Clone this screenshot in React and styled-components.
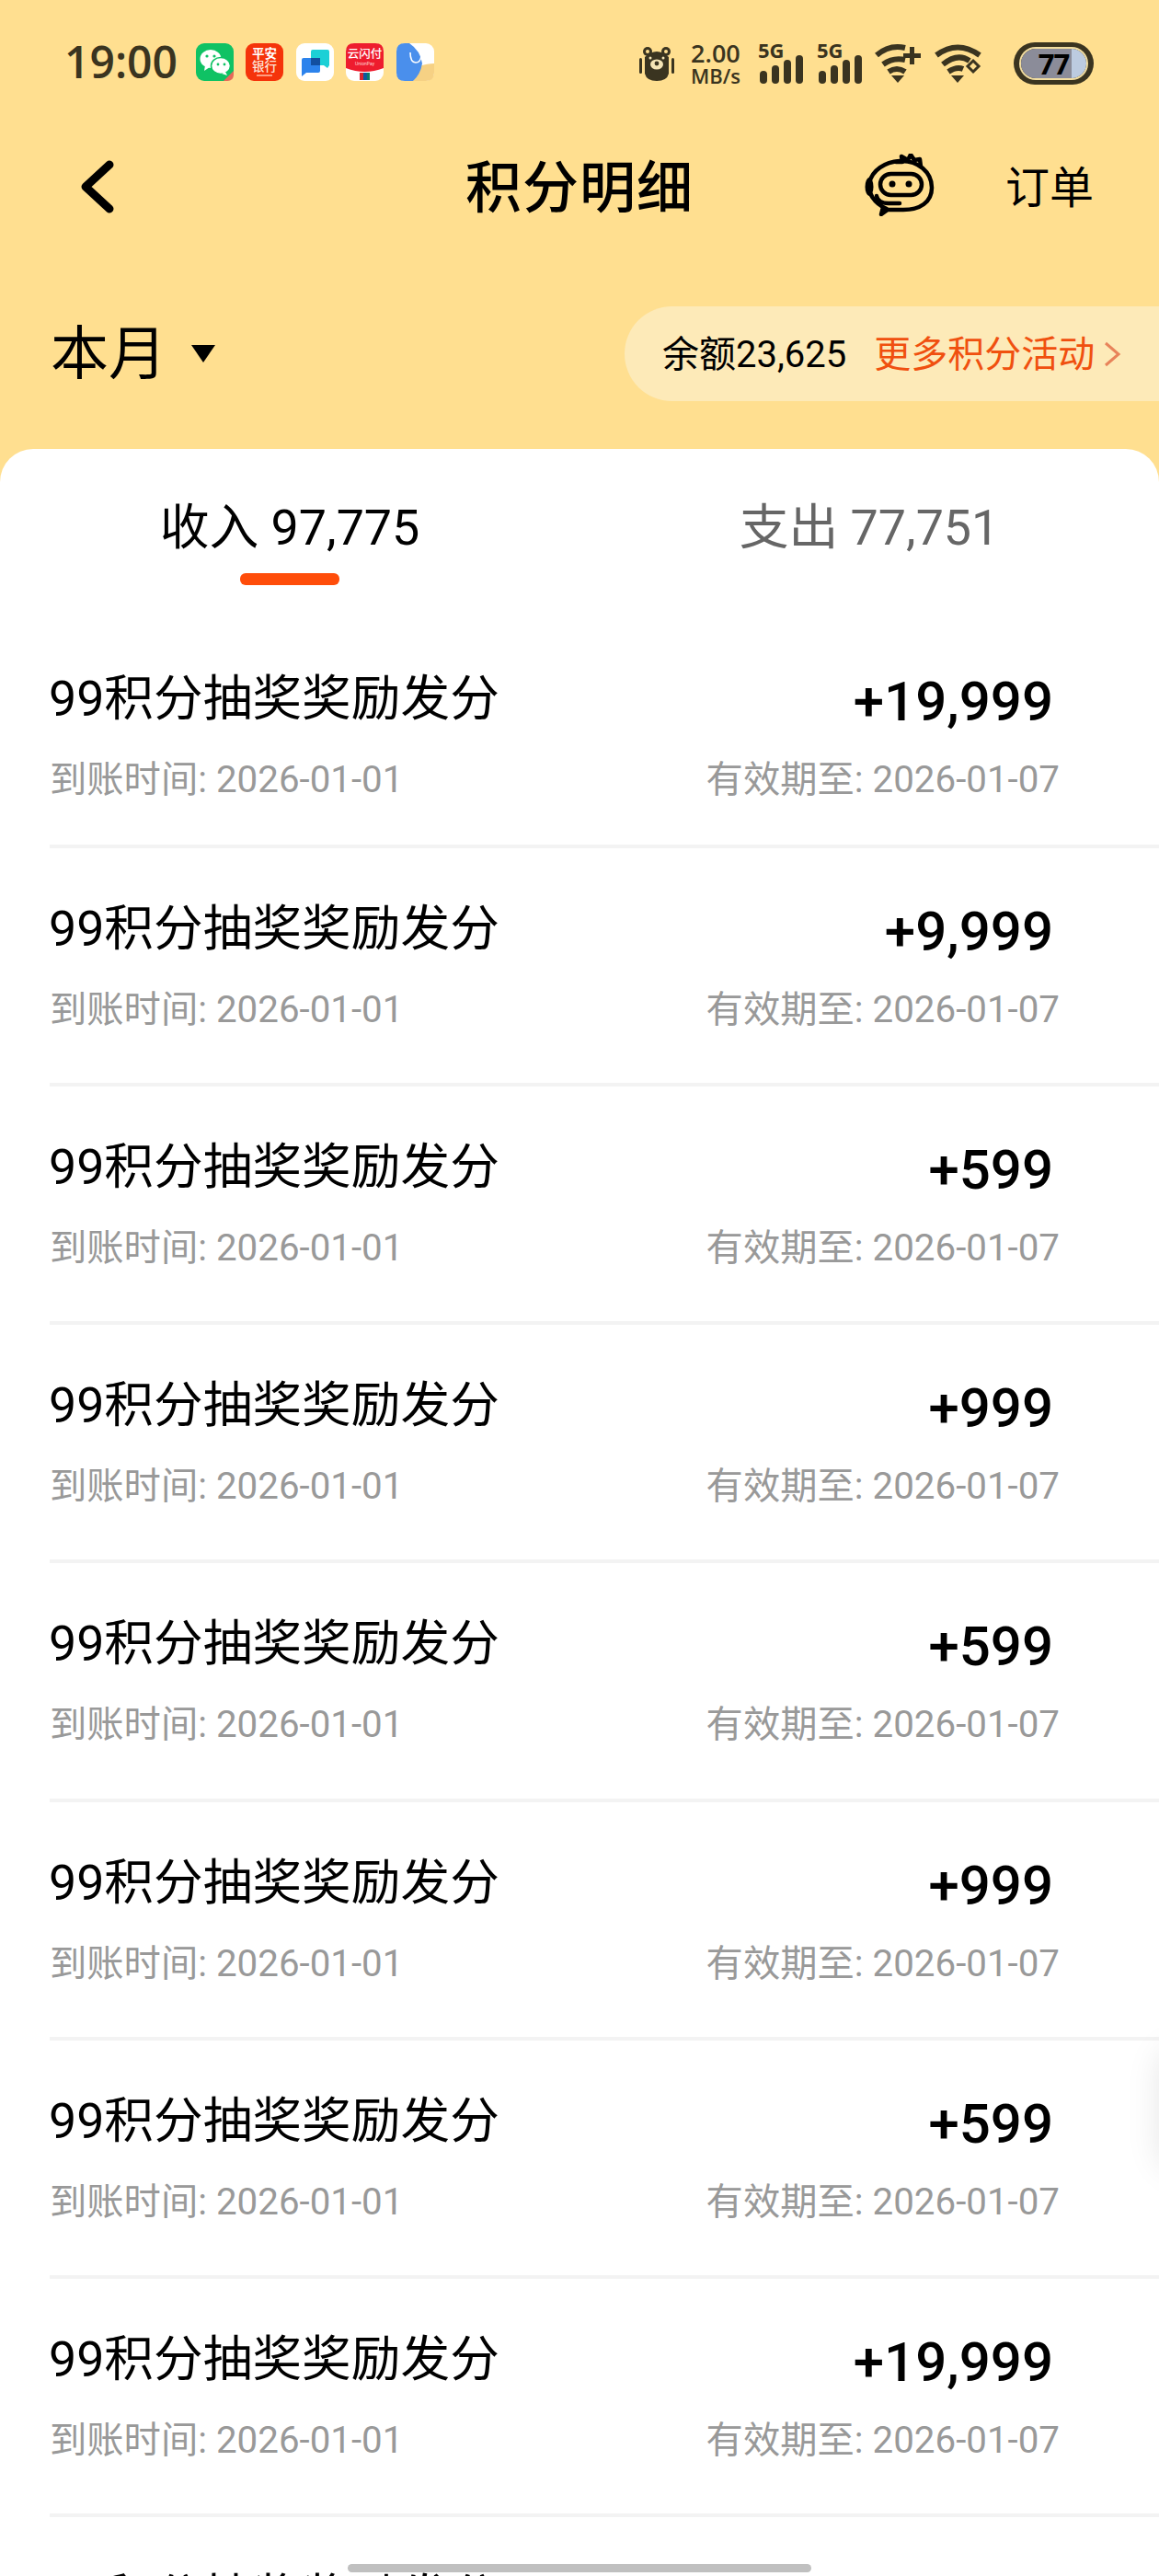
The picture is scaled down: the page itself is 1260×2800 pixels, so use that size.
import React from 'react'
import styled, { createGlobalStyle } from 'styled-components'

const sans = `Roboto, 'Noto Sans CJK SC', sans-serif`
const ink = '#3a3420'

const GlobalStyle = createGlobalStyle`
  html, body { margin: 0; padding: 0; background: #fff; }
  body { font-family: ${sans}; color: #000; }
`

const Page = styled.div`
  position: relative;
  width: 1260px;
  height: 2800px;
  overflow: hidden;
  background: #ffdf90;
`

const StatusBar = styled.div`
  height: 134px;
  box-sizing: border-box;
  padding: 0 71px 0 70px;
  display: flex;
  align-items: center;
  justify-content: space-between;
  color: ${ink};
`

const StatusLeft = styled.div`
  display: flex;
  align-items: center;
`

const Clock = styled.span`
  font-family: 'Open Sans', sans-serif;
  font-size: 48px;
  font-weight: 600;
  line-height: 48px;
  margin-right: 20px;
`

const AppIcons = styled.div`
  display: flex;
  gap: 13.5px;
`

const AppSvg = styled.svg`
  display: block;
  width: 41px;
  height: 41px;
`

const StatusRight = styled.div`
  display: flex;
  align-items: center;
  gap: 14px;
  margin-top: 3px;
`

const Bear = styled.svg`
  display: block;
  width: 38px;
  height: 38px;
  margin-right: 4px;
`

const Speed = styled.div`
  display: flex;
  flex-direction: column;
  align-items: center;
  font-family: 'Open Sans', sans-serif;
  font-weight: 600;
  margin-right: 4px;
`

const SpeedValue = styled.span`
  font-size: 27px;
  line-height: 26px;
`

const SpeedUnit = styled.span`
  font-size: 22px;
  line-height: 22px;
`

const Signal = styled.svg`
  display: block;
  width: 50px;
  height: 44px;
  overflow: visible;
`

const Wifi = styled.svg`
  display: block;
  width: 51px;
  height: 43px;
`

const Battery = styled.div`
  box-sizing: border-box;
  width: 87px;
  height: 46px;
  margin-left: 21px;
  border-radius: 23px;
  background: ${ink};
  padding: 7px 8px;
  display: flex;
`

const BatteryCell = styled.div`
  flex: 1;
  border-radius: 16px;
  box-shadow: 0 0 0 2px #f1dc9f;
  background: linear-gradient(90deg, #8b8c99 0 78%, #bccbe0 78% 100%);
  color: #000;
  font-family: 'Open Sans', sans-serif;
  font-size: 31px;
  font-weight: 700;
  line-height: 32px;
  text-align: center;
  letter-spacing: -1px;
`

const Nav = styled.div`
  height: 142px;
  display: grid;
  grid-template-columns: 1fr auto 1fr;
  align-items: center;
`

const BackIcon = styled.svg`
  display: block;
  width: 40px;
  height: 60px;
  margin: -4px 0 0 86px;
`

const Title = styled.h1`
  margin: 0;
  font-size: 61px;
  font-weight: 500;
  line-height: 70px;
  letter-spacing: 1px;
`

const NavRight = styled.div`
  display: flex;
  justify-content: flex-end;
  align-items: center;
  gap: 77px;
  padding-right: 71px;
`

const RobotIcon = styled.svg`
  display: block;
  width: 76px;
  height: 68px;
  margin-top: -8px;
`

const OrdersLink = styled.span`
  font-size: 48px;
  line-height: 56px;
`

const FilterRow = styled.div`
  margin-top: 57px;
  height: 103px;
  display: flex;
  align-items: center;
  justify-content: space-between;
  padding-left: 55px;
`

const MonthPicker = styled.div`
  display: flex;
  align-items: center;
  gap: 27px;
  font-size: 63px;
  line-height: 70px;
`

const Caret = styled.span`
  width: 0;
  height: 0;
  border-left: 13px solid transparent;
  border-right: 13px solid transparent;
  border-top: 19px solid #000;
`

const BalancePill = styled.div`
  box-sizing: border-box;
  width: 581px;
  height: 103px;
  padding: 0 0 5px 41px;
  display: flex;
  align-items: center;
  background: #fdeab8;
  border-radius: 52px 0 0 52px;
  font-size: 40px;
`

const MoreLink = styled.span`
  margin-left: 30px;
  color: #f0500f;
`

const PillArrow = styled.svg`
  display: block;
  width: 20px;
  height: 30px;
  margin: 5px 0 0 9px;
`

const Card = styled.div`
  margin-top: 52px;
  background: #fff;
  border-radius: 36px 36px 0 0;
`

const Tabs = styled.div`
  display: grid;
  grid-template-columns: 1fr 1fr;
  padding-top: 56px;
`

const Tab = styled.div`
  display: flex;
  flex-direction: column;
  align-items: center;
  gap: 19px;
  font-size: 53.8px;
  line-height: 60px;
  color: ${p => (p.$active ? '#000' : '#666')};
  &::after {
    content: '';
    width: 108px;
    height: 13px;
    border-radius: 6px;
    background: ${p => (p.$active ? '#ff4d0a' : 'transparent')};
  }
`

const List = styled.div`
  padding-top: 36px;
`

const Row = styled.div`
  box-sizing: border-box;
  height: 259.14px;
  margin-left: 54px;
  padding: 58px 108px 0 0;
  border-bottom: 4px solid #f3f3f3;
  &:first-child {
    height: 250px;
  }
`

const RowLine = styled.div`
  display: flex;
  justify-content: space-between;
  align-items: flex-start;
`

const RowTitle = styled.span`
  margin-left: -1px;
  font-size: 53.7px;
  line-height: 60px;
`

const Amount = styled.span`
  display: block;
  height: 60px;
  font-size: 60px;
  font-weight: 500;
  line-height: 65px;
  padding-right: 7px;
`

const RowMeta = styled(RowLine)`
  margin-top: 33px;
  font-size: 40.3px;
  line-height: 50px;
  color: #999;
`

const EdgeShadow = styled.div`
  position: absolute;
  top: 2225px;
  right: -50px;
  width: 50px;
  height: 135px;
  border-radius: 30px;
  box-shadow: 0 0 36px rgba(0, 0, 0, 0.1);
`

const HomeBar = styled.div`
  position: absolute;
  left: 378px;
  bottom: 4px;
  width: 504px;
  height: 9px;
  border-radius: 5px;
  background: #c0c0c0;
`

const amounts = ['+19,999', '+9,999', '+599', '+999', '+599', '+999', '+599', '+19,999']

const cjk = "'Noto Sans CJK SC', sans-serif"

const WeChatIcon = () => (
  <AppSvg viewBox="0 0 41 41">
    <rect width="41" height="41" rx="9" fill="#0fc264" />
    <path d="M30 41 L41 30 L41 34 Q41 41 34 41 Z" fill="#e8685a" />
    <ellipse cx="16" cy="17" rx="11.5" ry="10" fill="#fff" />
    <path d="M10 24 L9 30 L15 26 Z" fill="#fff" />
    <ellipse cx="27" cy="24.5" rx="10.5" ry="9" fill="#fff" stroke="#0fc264" strokeWidth="1.5" />
    <path d="M32 31 L34 35 L28 33 Z" fill="#fff" />
    <circle cx="12" cy="14" r="1.6" fill="#0fc264" />
    <circle cx="20" cy="14" r="1.6" fill="#0fc264" />
    <circle cx="24" cy="23" r="1.4" fill="#0fc264" />
    <circle cx="31" cy="23" r="1.4" fill="#0fc264" />
  </AppSvg>
)

const PingAnIcon = () => (
  <AppSvg viewBox="0 0 41 41">
    <rect width="41" height="41" rx="9" fill="#f5330a" />
    <text x="20.5" y="16" textAnchor="middle" fontSize="13.5" fontWeight="700" fontFamily={cjk} fill="#fff">平安</text>
    <text x="20.5" y="30" textAnchor="middle" fontSize="13.5" fontWeight="500" fontFamily={cjk} fill="#fde5da">银行</text>
    <rect x="12" y="34" width="17" height="2" fill="#ff9d80" />
  </AppSvg>
)

const ChatIcon = () => (
  <AppSvg viewBox="0 0 41 41">
    <rect width="41" height="41" rx="9" fill="#fff" />
    <path d="M16 9 Q16 7 18 7 L34 7 Q36 7 36 9 L36 24 L34 27 L30 24 L16 24 Z" fill="#1cd0d6" />
    <path d="M6 18 Q6 16 8 16 L24 16 Q26 16 26 18 L26 30 Q26 32 24 32 L11 32 L6 36 Z" fill="#2c83ec" />
    <rect x="16" y="16" width="10" height="8" fill="#124f9f" />
  </AppSvg>
)

const UnionPayIcon = () => (
  <AppSvg viewBox="0 0 41 41">
    <rect width="41" height="41" rx="9" fill="#fff" />
    <path d="M0 9 Q0 0 9 0 L32 0 Q41 0 41 9 L41 27 Q20.5 35 0 27 Z" fill="#ee1c2e" />
    <text x="20.5" y="16" textAnchor="middle" fontSize="12.5" fontWeight="500" fontFamily={cjk} fill="#fff">云闪付</text>
    <text x="20.5" y="24" textAnchor="middle" fontSize="5" fontFamily="Roboto, sans-serif" fill="#ffd6d6">UnionPay</text>
    <rect x="15" y="32" width="4" height="8" fill="#d9232e" />
    <rect x="19" y="32" width="4" height="8" fill="#0b5a9e" />
    <rect x="23" y="32" width="3" height="8" fill="#0a7a6a" />
  </AppSvg>
)

const LeafIcon = () => (
  <AppSvg viewBox="0 0 41 41">
    <rect width="41" height="41" rx="9" fill="#fff" />
    <path d="M41 22 L41 32 Q41 41 32 41 L18 41 L24 25 Q34 22 41 22 Z" fill="#f6d184" />
    <path d="M0 9 Q0 0 9 0 L14 0 Q26 8 28 22 Q26 34 18 41 L9 41 Q0 41 0 32 Z" fill="#4a8fec" />
    <path d="M15 10 Q15 21 21 21 Q26 21 27 14" fill="none" stroke="#fff" strokeWidth="1.6" />
  </AppSvg>
)

const BearIcon = () => (
  <Bear viewBox="0 0 38 38">
    <circle cx="9" cy="6" r="5" fill={ink} />
    <circle cx="29" cy="6" r="5" fill={ink} />
    <circle cx="9" cy="6" r="2" fill="#ffdf90" />
    <circle cx="29" cy="6" r="2" fill="#ffdf90" />
    <rect x="0" y="13" width="3" height="17" rx="1.5" fill={ink} />
    <rect x="35" y="13" width="3" height="17" rx="1.5" fill={ink} />
    <path d="M6 12 Q19 0 32 12 L32 30 Q30 38 19 38 Q8 38 6 30 Z" fill={ink} />
    <ellipse cx="19" cy="20" rx="7" ry="5.5" fill="#f4e4b5" />
    <circle cx="19" cy="19" r="2.4" fill={ink} />
    <circle cx="12" cy="13" r="1.5" fill="#f4e4b5" />
    <circle cx="26" cy="13" r="1.5" fill="#f4e4b5" />
  </Bear>
)

const SignalIcon = () => (
  <Signal viewBox="0 0 50 44">
    <text x="1" y="16" fontSize="22" fontWeight="700" fontFamily="'Open Sans', sans-serif" fill={ink}>5G</text>
    <rect x="3" y="30" width="8" height="14" rx="4" fill={ink} />
    <rect x="16" y="24" width="8" height="20" rx="4" fill={ink} />
    <rect x="29" y="18" width="8" height="26" rx="4" fill={ink} />
    <rect x="42" y="13" width="8" height="31" rx="4" fill={ink} />
  </Signal>
)

const WifiPlusIcon = () => (
  <Wifi viewBox="0 0 51 43">
    <g fill="none" stroke={ink} strokeWidth="6">
      <path d="M2 13 Q16 1 33 5" />
      <path d="M9 23 Q20 15 33 18" />
      <path d="M15 31 Q24 25 33 31" />
    </g>
    <path d="M18 35 L32 35 L25 43 Z" fill={ink} />
    <rect x="38" y="4" width="5" height="19" fill={ink} />
    <rect x="31" y="11" width="19" height="5" fill={ink} />
  </Wifi>
)

const WifiDiamondIcon = () => (
  <Wifi viewBox="0 0 51 43">
    <g fill="none" stroke={ink} strokeWidth="6">
      <path d="M2 13 Q25 -4 49 13" />
      <path d="M9 23 Q25 10 38 19" />
      <path d="M15 31 Q24 25 31 28" />
    </g>
    <path d="M18 35 L32 35 L25 43 Z" fill={ink} />
    <path d="M42 19 L48 25 L42 31 L36 25 Z" fill="none" stroke={ink} strokeWidth="3" />
  </Wifi>
)

const RobotMark = () => (
  <RobotIcon viewBox="0 0 76 68">
    <ellipse cx="5" cy="36" rx="4.5" ry="10" fill="#000" />
    <g fill="none" stroke="#000" strokeWidth="4.5" strokeLinecap="round" strokeLinejoin="round">
      <path d="M24 60 C10 54 3 42 5 32 C8 18 22 9 38 8 C58 7 73 20 73 37 C73 53 60 61 42 61 L25 61 L18 66 L20 58" />
      <path d="M34 9 L41 9 L40 3 L47 7 L50 1 L54 7 L60 6 L61 14" />
      <rect x="17" y="22" width="45" height="23" rx="11.5" />
      <path d="M13 46 C14 52 20 54 26 54 L38 54" />
    </g>
    <circle cx="30" cy="33" r="3.5" fill="#000" />
    <circle cx="48" cy="33" r="3.5" fill="#000" />
  </RobotIcon>
)

const App = () => {
  return (
    <Page>
      <GlobalStyle />
      <StatusBar>
        <StatusLeft>
          <Clock>19:00</Clock>
          <AppIcons>
            <WeChatIcon />
            <PingAnIcon />
            <ChatIcon />
            <UnionPayIcon />
            <LeafIcon />
          </AppIcons>
        </StatusLeft>
        <StatusRight>
          <BearIcon />
          <Speed>
            <SpeedValue>2.00</SpeedValue>
            <SpeedUnit>MB/s</SpeedUnit>
          </Speed>
          <SignalIcon />
          <SignalIcon />
          <WifiPlusIcon />
          <WifiDiamondIcon />
          <Battery>
            <BatteryCell>77</BatteryCell>
          </Battery>
        </StatusRight>
      </StatusBar>
      <Nav>
        <BackIcon viewBox="0 0 40 60">
          <polyline points="33,6 7,30 33,54" fill="none" stroke="#000" strokeWidth="9" strokeLinecap="round" strokeLinejoin="round" />
        </BackIcon>
        <Title>积分明细</Title>
        <NavRight>
          <RobotMark />
          <OrdersLink>订单</OrdersLink>
        </NavRight>
      </Nav>
      <FilterRow>
        <MonthPicker>
          本月
          <Caret />
        </MonthPicker>
        <BalancePill>
          余额23,625
          <MoreLink>更多积分活动</MoreLink>
          <PillArrow viewBox="0 0 20 30">
            <polyline points="3,3 17,15 3,27" fill="none" stroke="#e8835a" strokeWidth="3" />
          </PillArrow>
        </BalancePill>
      </FilterRow>
      <Card>
        <Tabs>
          <Tab $active>收入 97,775</Tab>
          <Tab>支出 77,751</Tab>
        </Tabs>
        <List>
          {amounts.map((amount, index) => (
            <Row key={index}>
              <RowLine>
                <RowTitle>99积分抽奖奖励发分</RowTitle>
                <Amount>{amount}</Amount>
              </RowLine>
              <RowMeta>
                <span>到账时间: 2026-01-01</span>
                <span>有效期至: 2026-01-07</span>
              </RowMeta>
            </Row>
          ))}
          <Row>
            <RowLine>
              <RowTitle>99积分抽奖奖励发分</RowTitle>
            </RowLine>
          </Row>
        </List>
      </Card>
      <EdgeShadow />
      <HomeBar />
    </Page>
  )
}

export default App
